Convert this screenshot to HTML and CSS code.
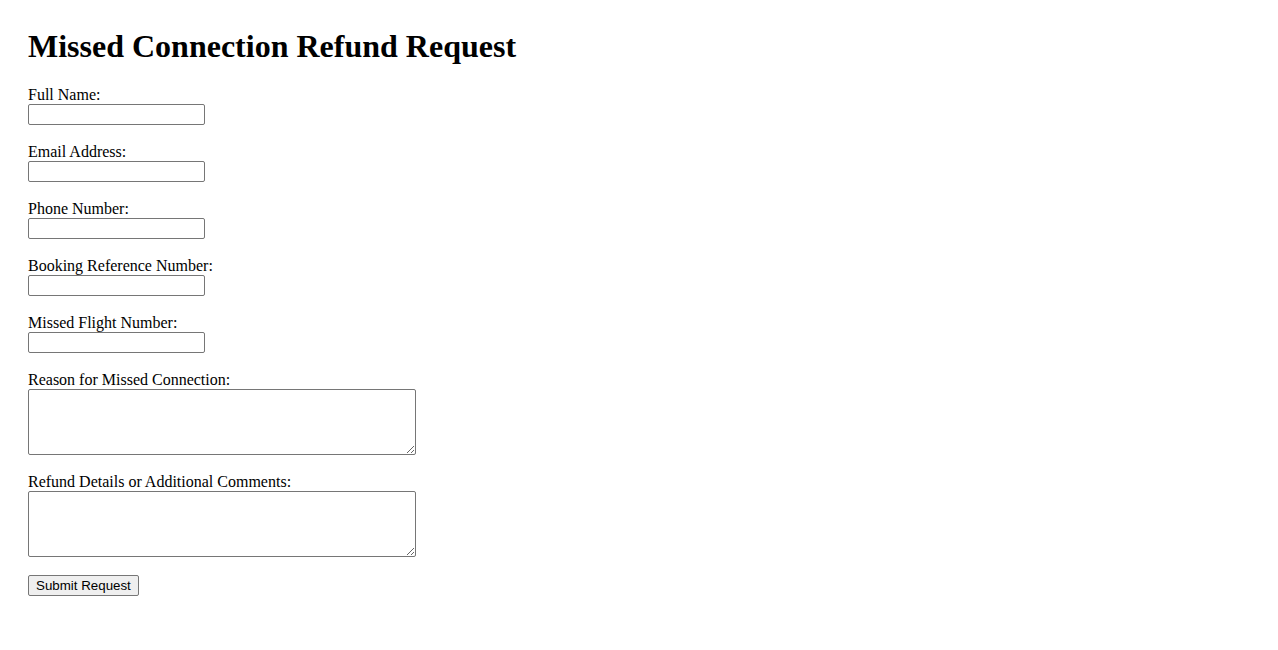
FILE: index.html
```html
<!DOCTYPE html>
<html>
<head>
<meta charset="utf-8">
<title>Missed Connection Refund Request</title>
<link rel="stylesheet" href="styles.css">
</head>
<body>
<h1 class="title">Missed Connection Refund Request</h1>
<form class="form">
  <div class="field"><label class="label" for="name">Full Name:</label><input class="input" id="name" type="text"></div>
  <div class="field"><label class="label" for="email">Email Address:</label><input class="input" id="email" type="email"></div>
  <div class="field"><label class="label" for="phone">Phone Number:</label><input class="input" id="phone" type="tel"></div>
  <div class="field"><label class="label" for="booking">Booking Reference Number:</label><input class="input" id="booking" type="text"></div>
  <div class="field"><label class="label" for="flight">Missed Flight Number:</label><input class="input" id="flight" type="text"></div>
  <div class="field"><label class="label" for="reason">Reason for Missed Connection:</label><textarea class="textarea" id="reason"></textarea></div>
  <div class="field"><label class="label" for="comments">Refund Details or Additional Comments:</label><textarea class="textarea" id="comments"></textarea></div>
  <div class="actions"><button class="button" type="submit">Submit Request</button></div>
</form>
</body>
</html>
```
FILE: styles.css
```css
html, body {
  margin: 0;
  padding: 0;
  background: #ffffff;
}
body {
  padding: 28px;
  font-family: "Liberation Serif", "Times New Roman", serif;
  font-size: 16px;
  color: #000000;
}
.title {
  margin: 0 0 21px 0;
  font-size: 32px;
  font-weight: bold;
  line-height: 37px;
}
.form {
  display: flex;
  flex-direction: column;
  gap: 18px;
  align-items: flex-start;
}
.field {
  display: flex;
  flex-direction: column;
  align-items: flex-start;
}
.label {
  display: block;
  line-height: 18px;
  height: 18px;
}
.input {
  box-sizing: border-box;
  width: 177px;
  height: 21px;
  margin: 0;
  padding: 1px 2px;
  border: 1px solid #767676;
  border-radius: 2px;
  background: #ffffff;
  font-family: "Liberation Sans", Arial, sans-serif;
  font-size: 13.33px;
}
.textarea {
  box-sizing: border-box;
  width: 388px;
  height: 66px;
  margin: 0;
  padding: 2px;
  border: 1px solid #767676;
  border-radius: 2px;
  background: #ffffff;
  font-family: "Liberation Mono", monospace;
  font-size: 13.33px;
  resize: both;
}
.actions {
  display: flex;
}
.button {
  box-sizing: border-box;
  height: 21px;
  margin: 0;
  padding: 1px 7px;
  border: 1px solid #767676;
  border-radius: 2px;
  background: #efefef;
  color: #000000;
  font-family: "Liberation Sans", Arial, sans-serif;
  font-size: 13.33px;
  line-height: 16px;
}
```
